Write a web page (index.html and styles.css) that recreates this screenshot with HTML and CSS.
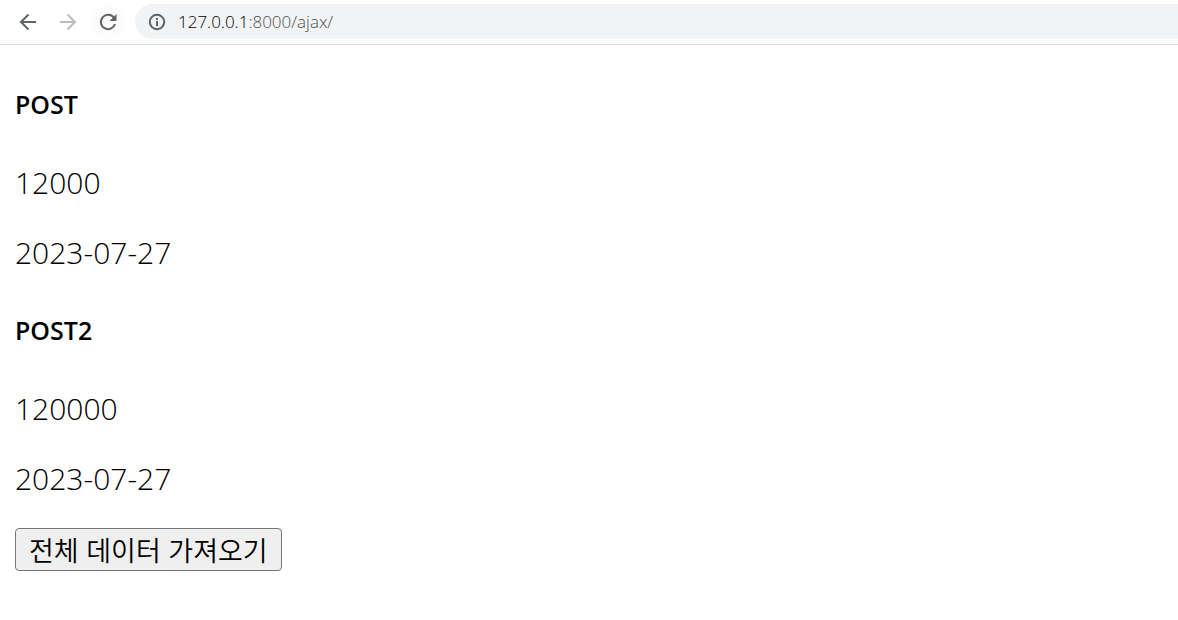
FILE: index.html
```html
<!DOCTYPE html>
<html lang="ko">
<head>
<meta charset="utf-8">
<title>127.0.0.1:8000/ajax/</title>
<link rel="stylesheet" href="styles.css">
</head>
<body>
<header class="toolbar">
  <button class="nav" type="button" aria-label="Back">
    <svg class="icon" viewBox="0 0 18 18"><path d="M17 9H2M9.500 1.500L2 9l7.500 7.500"/></svg>
  </button>
  <button class="nav nav-off" type="button" aria-label="Forward" disabled>
    <svg class="icon" viewBox="0 0 18 18"><path d="M1 9h15M8.500 1.500L16 9l-7.500 7.500"/></svg>
  </button>
  <button class="nav nav-reload" type="button" aria-label="Reload">
    <svg class="icon" viewBox="0 0 18 18"><path d="M15 4.800A7.200 7.200 0 1 0 16 11"/><path class="solid" d="M17.500 1v7h-7z"/></svg>
  </button>
  <div class="address">
    <button class="info" type="button" aria-label="Site information">
      <svg class="icon" viewBox="0 0 18 18"><circle cx="9" cy="9" r="7.200"/><path d="M9 8v5M9 5v2"/></svg>
    </button>
    <div class="url" role="textbox" aria-label="Address" contenteditable="true" spellcheck="false"><span class="host">127.0.0.1</span>:8000/ajax/</div>
  </div>
</header>
<main class="page">
  <article>
    <h5 class="title">POST</h5>
    <p class="line">12000</p>
    <p class="line">2023-07-27</p>
  </article>
  <article>
    <h5 class="title">POST2</h5>
    <p class="line">120000</p>
    <p class="line">2023-07-27</p>
  </article>
  <button class="load" type="button">전체 데이터 가져오기</button>
</main>
</body>
</html>
```
FILE: styles.css
```css
body {
  margin: 0;
  background: #fff;
  color: #000;
  font-family: "Open Sans", "Noto Sans", "Noto Sans CJK KR", sans-serif;
}

.toolbar {
  display: flex;
  align-items: center;
  gap: 6px;
  padding: 4px 0 5px 11px;
  border-bottom: 1px solid #dadce0;
}

.nav {
  display: flex;
  align-items: center;
  justify-content: center;
  width: 34px;
  height: 34px;
  padding: 0;
  border: 0;
  border-radius: 50%;
  background: none;
  color: #5f6368;
}

.nav-off {
  color: #babcbe;
}

.nav-reload {
  background: #fcfcfc;
}

.icon {
  display: block;
  width: 18px;
  height: 18px;
  fill: none;
  stroke: currentColor;
  stroke-width: 2;
}

.solid {
  fill: currentColor;
  stroke: none;
}

.address {
  display: flex;
  flex: 1;
  align-items: center;
  gap: 12px;
  margin-left: 4px;
  padding-left: 13px;
  border-radius: 18px 0 0 18px;
  background: #f1f3f4;
}

.info {
  padding: 0;
  border: 0;
  background: none;
  color: #5f6368;
}

.url {
  flex: 1;
  outline: 0;
  color: #4c5054;
  font-size: 17px;
  font-weight: 300;
  line-height: 35px;
}

.host {
  color: #000;
}

.page {
  display: flow-root;
  padding: 2px 15px;
}

.title {
  margin: 40px 0 41px;
  font-size: 25px;
  font-weight: 600;
  line-height: 34px;
}

.line {
  margin: 29px 0;
  font-size: 30px;
  font-weight: 300;
  line-height: 41px;
}

.load {
  padding: 0 13px;
  border: 1px solid #767676;
  border-radius: 4px;
  background: #efefef;
  color: #000;
  font-family: "Noto Sans CJK KR", sans-serif;
  font-size: 27px;
  font-weight: 350;
  line-height: 41px;
}
```
